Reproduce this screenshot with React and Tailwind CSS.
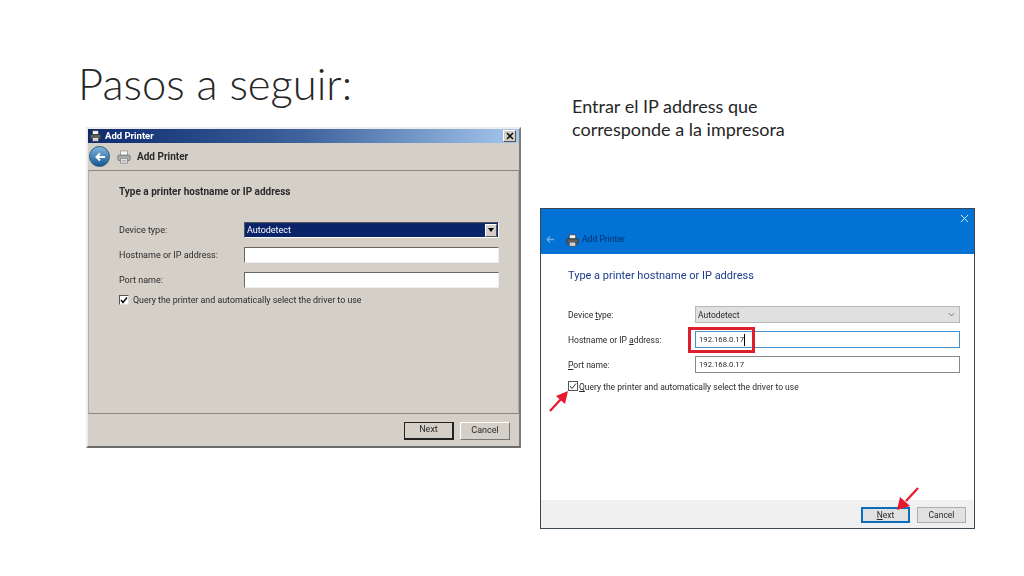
import React from 'react';

const PrinterIcon = ({ className, dark }) => (
  <svg viewBox="0 0 16 16" className={className}>
    <rect x="4" y="1" width="8" height="5" fill="#f4f4f4" stroke={dark ? '#444' : '#999'} strokeWidth="1" />
    <rect x="1" y="6" width="14" height="6" rx="1" fill={dark ? '#5c6066' : '#a9adb2'} stroke={dark ? '#333' : '#777'} strokeWidth="1" />
    <rect x="4" y="10" width="8" height="5" fill="#fff" stroke={dark ? '#444' : '#888'} strokeWidth="1" />
    <path d="M5 12h6M5 13.5h6" stroke="#888" strokeWidth="0.7" />
  </svg>
);

const OldWindow = () => (
  <div className="absolute left-[86px] top-[127px] w-[435px] h-[321px] flex flex-col bg-[#d4d0c8] border-2 border-t-[#ececec] border-l-[#ececec] border-r-[#7c7c7c] border-b-[#6c6c6c] font-['Roboto',sans-serif] text-[#2a2a2a] blur-[0.3px]">
    <div className="h-[14px] flex items-center bg-gradient-to-r from-[#0e2a6e] via-[#3f639c] to-[#a6c8ee] text-white text-[9.5px] font-bold pl-[1px] pr-[3px]">
      <PrinterIcon className="w-[13px] h-[12px] mr-[3px]" dark />
      <span>Add Printer</span>
      <div className="ml-auto w-[13px] h-[12px] bg-[#d4d0c8] border border-t-white border-l-white border-r-[#555] border-b-[#555] flex items-center justify-center">
        <svg viewBox="0 0 8 8" className="w-[8px] h-[8px]">
          <path d="M1 1 L7 7 M7 1 L1 7" stroke="#111" strokeWidth="1.6" />
        </svg>
      </div>
    </div>
    <div className="h-[27px] flex items-center pl-[1px]">
      <div className="w-[21px] h-[21px] rounded-full bg-gradient-to-b from-[#7fb5dc] to-[#0f5a94] border border-[#25597f] flex items-center justify-center">
        <svg viewBox="0 0 12 12" className="w-[12px] h-[12px]">
          <path d="M11 6 H3 M6 2.5 L2.5 6 L6 9.5" stroke="#fff" strokeWidth="2" fill="none" />
        </svg>
      </div>
      <PrinterIcon className="w-[14px] h-[14px] ml-[7px]" />
      <span className="ml-[6px] text-[10px] font-bold">Add Printer</span>
    </div>
    <div className="h-[244px] flex flex-col border border-t-[#8a8780] border-l-[#b0ada6] border-r-[#b0ada6] border-b-[#8a8780] pl-[30px] pr-[19px] pt-[14px]">
      <div className="text-[10px] font-bold leading-[14px]">Type a printer hostname or IP address</div>
      <div className="mt-[23px] flex items-center h-[16px] text-[9px]">
        <span className="w-[125px] pt-[2px]">Device type:</span>
        <div className="flex-1 h-[16px] flex items-center bg-[#0a246a] border border-t-[#555] border-l-[#555] border-r-white border-b-white text-white pl-[2px] pr-[1px]">
          <span className="pt-[2px]">Autodetect</span>
          <div className="ml-auto w-[12px] h-[13px] bg-[#d4d0c8] border border-t-white border-l-white border-r-[#555] border-b-[#555] flex items-center justify-center">
            <div className="w-0 h-0 border-x-[3px] border-x-transparent border-t-[4px] border-t-black" />
          </div>
        </div>
      </div>
      <div className="mt-[9px] flex items-center h-[16px] text-[9px]">
        <span className="w-[125px] pt-[2px]">Hostname or IP address:</span>
        <div className="flex-1 h-[16px] bg-white border border-t-[#666] border-l-[#666] border-r-[#eee] border-b-[#eee]" />
      </div>
      <div className="mt-[9px] flex items-center h-[16px] text-[9px]">
        <span className="w-[125px] pt-[2px]">Port name:</span>
        <div className="flex-1 h-[16px] bg-white border border-t-[#666] border-l-[#666] border-r-[#eee] border-b-[#eee]" />
      </div>
      <div className="mt-[6px] flex items-center text-[8.85px] h-[12px]">
        <div className="w-[10px] h-[10px] bg-white border border-t-[#555] border-l-[#555] border-r-[#ddd] border-b-[#ddd] flex items-center justify-center">
          <svg viewBox="0 0 8 8" className="w-[8px] h-[8px]">
            <path d="M1 4 L3 6.5 L7 1.5" stroke="#111" strokeWidth="1.6" fill="none" />
          </svg>
        </div>
        <span className="ml-[4px] pt-[2px]">Query the printer and automatically select the driver to use</span>
      </div>
    </div>
    <div className="flex-1 flex items-center justify-end gap-[6px] pr-[9px] pt-[1px] text-[9px]">
      <div className="w-[50px] h-[18px] flex items-center justify-center border border-[#222] border-r-2 border-b-2 bg-[#d4d0c8]">Next</div>
      <div className="w-[50px] h-[18px] flex items-center justify-center border border-t-white border-l-white border-r-[#777] border-b-[#777] bg-[#d4d0c8]">Cancel</div>
    </div>
  </div>
);

const NewWindow = () => (
  <div className="absolute left-[540px] top-[208px] w-[435px] h-[321px] flex flex-col bg-white border border-[#3c4650] font-['Roboto',sans-serif] text-[#2a2a2a] blur-[0.3px]">
    <div className="h-[45px] bg-[#0272d4] relative flex items-end pb-[7px] pl-[5px]">
      <svg viewBox="0 0 10 10" className="w-[9px] h-[9px] mb-[3px] opacity-70">
        <path d="M9 5 H1 M4.5 1.5 L1 5 L4.5 8.5" stroke="#9cc4ea" strokeWidth="1.4" fill="none" />
      </svg>
      <PrinterIcon className="w-[13px] h-[13px] ml-[11px]" dark />
      <span className="ml-[3px] text-[8.6px] text-[#08306a] mb-[1px]">Add Printer</span>
      <svg viewBox="0 0 10 10" className="absolute right-[5px] top-[5px] w-[9px] h-[9px]">
        <path d="M1 1 L9 9 M9 1 L1 9" stroke="#d8ecfb" strokeWidth="1.1" />
      </svg>
    </div>
    <div className="flex-1 flex flex-col pl-[27px] pr-[14px] pt-[14px]">
      <div className="text-[11px] leading-[16px] text-[#1d3a8c]">Type a printer hostname or IP address</div>
      <div className="mt-[22px] flex items-center h-[17px] text-[8.5px]">
        <span className="w-[127px] pt-[2px]">Device <u>t</u>ype:</span>
        <div className="flex-1 h-[17px] flex items-center justify-between bg-[#e0e0e0] border border-[#b8b8b8] pl-[2px] pr-[4px]">
          <span className="pt-[2px]">Autodetect</span>
          <svg viewBox="0 0 8 5" className="w-[7px] h-[5px]">
            <path d="M1 1 L4 4 L7 1" stroke="#666" strokeWidth="1" fill="none" />
          </svg>
        </div>
      </div>
      <div className="mt-[8px] flex items-center h-[17px] text-[8.5px]">
        <span className="w-[127px] pt-[2px]">Hostname or IP <u>a</u>ddress:</span>
        <div className="flex-1 h-[17px] flex items-center bg-white border border-[#4a90c8] pl-[3px] text-[7.7px]">
          <span>192.168.0.17</span>
          <div className="w-px h-[12px] bg-black" />
        </div>
      </div>
      <div className="mt-[8px] flex items-center h-[17px] text-[8.5px]">
        <span className="w-[127px] pt-[2px]"><u>P</u>ort name:</span>
        <div className="flex-1 h-[17px] flex items-center bg-white border border-[#8a8a8a] pl-[3px] text-[7.7px]">192.168.0.17</div>
      </div>
      <div className="mt-[7px] flex items-center h-[12px] text-[8.5px]">
        <div className="w-[10px] h-[10px] bg-white border border-[#555] flex items-center justify-center">
          <svg viewBox="0 0 8 8" className="w-[8px] h-[8px]">
            <path d="M1 4 L3 6.5 L7 1.5" stroke="#333" strokeWidth="1" fill="none" />
          </svg>
        </div>
        <span className="ml-[1px] pt-[2px]"><u>Q</u>uery the printer and automatically select the driver to use</span>
      </div>
    </div>
    <div className="h-[28px] bg-[#f0f0f0] flex items-center justify-end gap-[7px] pr-[8px] pt-[2px] text-[8.5px]">
      <div className="w-[49px] h-[16px] flex items-center justify-center bg-[#e1e1e1] border-2 border-[#0a6ebd]"><span><u>N</u>ext</span></div>
      <div className="w-[49px] h-[16px] flex items-center justify-center bg-[#e1e1e1] border border-[#adadad]">Cancel</div>
    </div>
  </div>
);

export default function App() {
  return (
    <div className="relative w-[1024px] h-[576px] bg-white overflow-hidden font-['Open_Sans',sans-serif]">
      <h1 className="absolute left-[78px] top-[54px] text-[43.5px] leading-[58px] font-light text-[#262626] font-['Lato',sans-serif]">Pasos a seguir:</h1>
      <p className="absolute left-[572px] top-[95px] w-[260px] text-[18px] leading-[23px] text-[#262626] font-['Lato',sans-serif]">
        Entrar el IP address que corresponde a la impresora
      </p>
      <OldWindow />
      <NewWindow />
      {/* red marks drawn over the second dialog */}
      <div className="absolute left-[688px] top-[327px] w-[67px] h-[26px] border-[3px] border-[#d9202c]" />
      <svg viewBox="0 0 24 24" className="absolute left-[548px] top-[389px] w-[24px] h-[24px]">
        <path d="M2 22 L13 10" stroke="#e8192c" strokeWidth="2.2" fill="none" />
        <path d="M20 2 L17 15 L8 7 Z" fill="#e8192c" />
      </svg>
      <svg viewBox="0 0 24 26" className="absolute left-[895px] top-[486px] w-[24px] h-[26px]">
        <path d="M23 2 L11 15" stroke="#e8192c" strokeWidth="2.2" fill="none" />
        <path d="M2 24 L5 11 L15 20 Z" fill="#e8192c" />
      </svg>
    </div>
  );
}
